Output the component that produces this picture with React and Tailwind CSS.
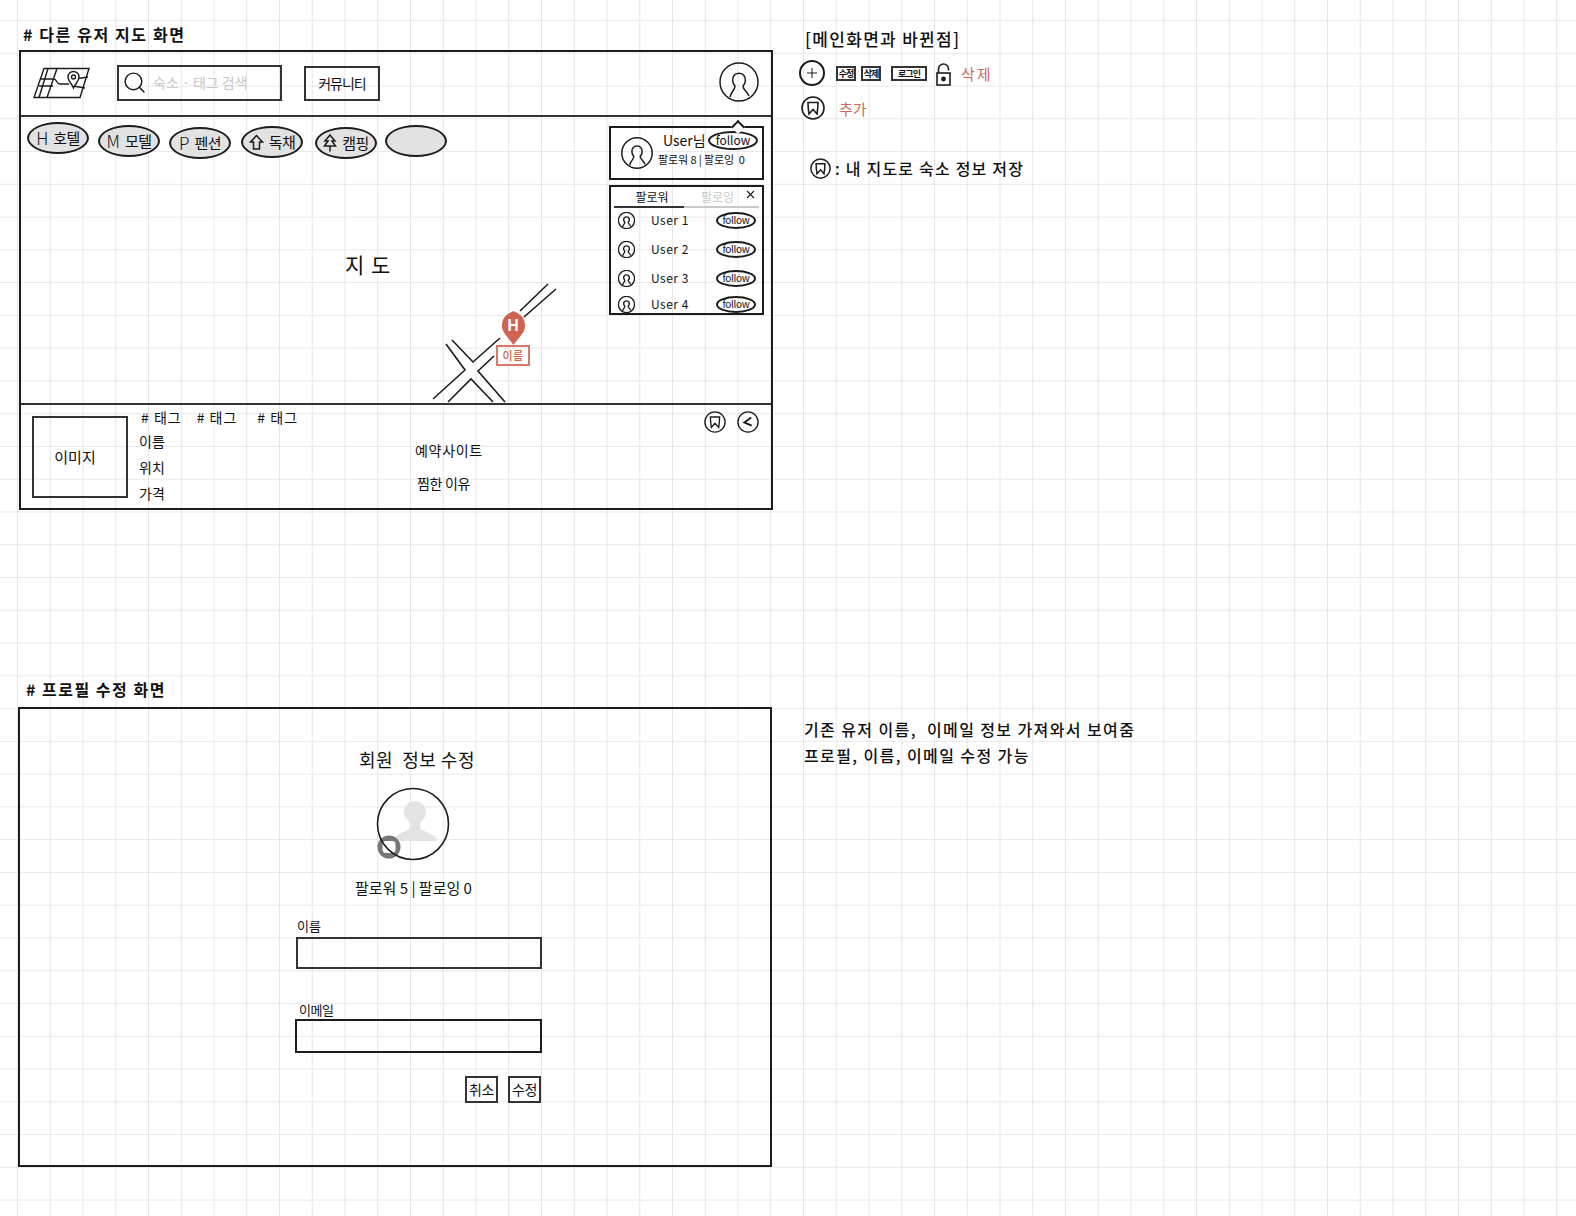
import React from 'react';
import { Search, Plus, X } from 'lucide-react';

const ink = '#1c1c1c';

const chips = [
  { label: '호텔', mark: 'H', box: 'ml-[6px] mt-[5px]' },
  { label: '모텔', mark: 'M', box: 'ml-[9px] mt-[8px]' },
  { label: '펜션', mark: 'P', box: 'ml-[9px] mt-[10px]' },
  { label: '독채', mark: 'home', box: 'ml-[10px] mt-[9px]' },
  { label: '캠핑', mark: 'tree', box: 'ml-[12px] mt-[10px]' },
  { label: '', mark: '', box: 'ml-[8px] mt-[8px]' },
];

const followers = [
  { name: 'User 1', row: '-mt-[1px]' },
  { name: 'User 2', row: 'mt-[3px]' },
  { name: 'User 3', row: 'mt-[3px]' },
  { name: 'User 4', row: 'mt-0' },
];

// 지도 로고
const MapLogo = () => (
  <svg className="mb-[2px]" width="58" height="32" viewBox="0 0 58 32" fill="none" stroke={ink} strokeWidth="1.4">
    <path d="M11 1.5H56L47 30.5H1Z" />
    <path d="M15 1.5L6 30.5M24 1.5L14 30.5M8 12H21C24 12 23 17 27 17H36M6 19H20M40 19L52 21M42 12L55 10" />
    <path d="M35 10A5.5 5.5 0 0 1 46 10C46 14 42 17 40.5 21C39 17 35 14 35 10Z" fill="#fff" />
    <circle cx="40.5" cy="10" r="2" />
  </svg>
);

const UserCircle = ({ size = 40, stroke = 1.5 }) => (
  <svg width={size} height={size} viewBox="0 0 40 40" fill="none" stroke={ink} strokeWidth={(stroke * 40) / size}>
    <circle cx="20" cy="20" r="19" />
    <path d="M11 35C12 30 16 28 16 24C13 21 13 16 15 13.5C17 10.5 23 10.5 25 13.5C27 16 27 21 24 24C24 28 28 29 30 34" />
  </svg>
);

const BookmarkCircle = ({ size = 22, stroke = 1.4 }) => (
  <svg width={size} height={size} viewBox="0 0 24 24" fill="none" stroke={ink} strokeWidth={(stroke * 24) / size}>
    <circle cx="12" cy="12" r="11" />
    <path d="M7 6.5H17C17 11 16.5 15 16 18L12 13.5L8 18C7.5 15 7 11 7 6.5Z" />
  </svg>
);

const ShareCircle = () => (
  <svg width="22" height="22" viewBox="0 0 24 24" fill="none" stroke={ink} strokeWidth="1.5">
    <circle cx="12" cy="12" r="11" />
    <path d="M15.5 7L8 12.5L16 16" strokeWidth="2" />
  </svg>
);

const HomeMark = () => (
  <svg width="15" height="17" viewBox="0 0 15 17" fill="none" stroke={ink} strokeWidth="1.5">
    <path d="M7.5 1.5L1.5 8H4.5V15H10.5V8H13.5Z" />
  </svg>
);

const TreeMark = () => (
  <svg width="14" height="18" viewBox="0 0 14 18" fill="none" stroke={ink} strokeWidth="1.5">
    <path d="M7 1L2 7H5L1.5 12H12.5L9 7H12ZM7 12V17.5" />
  </svg>
);

const LockMark = () => (
  <svg width="15" height="23" viewBox="0 0 15 23" fill="none" stroke={ink} strokeWidth="1.6">
    <path d="M2.5 10V6A5 5 0 0 1 12.5 6V7.5" />
    <rect x="1" y="10" width="13" height="12" />
    <circle cx="7.5" cy="16" r="1.6" fill={ink} />
  </svg>
);

const FollowPill = ({ big }) => (
  <span
    className={
      big
        ? 'flex h-[19px] w-[50px] items-center justify-center rounded-[50%] border-2 border-[#1c1c1c] text-[12px] leading-none'
        : 'flex h-[17px] w-[40px] items-center justify-center rounded-[50%] border-2 border-[#1c1c1c] text-[10px] leading-none tracking-[-0.3px]'
    }
  >
    follow
  </span>
);

const SmallBox = ({ children, width }) => (
  <span className={`flex h-[15px] ${width} items-center justify-center border-2 border-[#333] text-[9px] font-bold leading-none tracking-[-1px]`}>
    {children}
  </span>
);

const MapScreen = () => (
  <div className="h-[460px] border-2 border-[#1c1c1c] flex flex-col">
    {/* Header */}
    <div className="h-[65px] shrink-0 border-b-2 border-[#333] flex items-center pl-[12px] pr-[12px]">
      <MapLogo />
      <div className="mb-[2px] ml-[26px] h-[36px] w-[165px] border-2 border-[#333] flex items-center pl-[3px]">
        <Search size={25} strokeWidth={1.4} color={ink} />
        <span className="ml-[6px] whitespace-nowrap text-[14px] text-[#c8c8c8]">숙소 · 태그 검색</span>
      </div>
      <div className="ml-[22px] h-[35px] w-[76px] border-2 border-[#333] flex items-center justify-center text-[14px] tracking-[-1px]">
        커뮤니티
      </div>
      <div className="mb-[3px] ml-auto">
        <UserCircle size={40} />
      </div>
    </div>

    {/* Map */}
    <div className="relative h-[286px] shrink-0">
      <div className="flex items-start">
        {chips.map((chip, i) => (
          <div
            key={i}
            className={`${chip.box} h-[32px] w-[62px] shrink-0 rounded-[50%] border-2 border-[#1c1c1c] bg-[#e2e2e2] flex items-center justify-center gap-[5px] text-[15px]`}
          >
            {chip.mark === 'home' && <HomeMark />}
            {chip.mark === 'tree' && <TreeMark />}
            {chip.mark.length === 1 && <span className="text-[17px] font-light">{chip.mark}</span>}
            {chip.label && <span className="tracking-[-0.5px]">{chip.label}</span>}
          </div>
        ))}
      </div>

      <span className="absolute left-[324px] top-[132px] text-[21px] tracking-[1px]">지 도</span>

      {/* Roads */}
      <svg className="absolute inset-0 h-full w-full" viewBox="21 117 750 286" fill="none" stroke={ink} strokeWidth="1.6">
        <path d="M548 284L520 311M556 289L524 317" />
        <path d="M500 338L473 362L452 340M446 344L465 370L433 399M494 356L478 371L505 402M448 402L471 379L493 402" />
      </svg>

      {/* Marker */}
      <div className="absolute left-[475px] top-[194px] flex w-[34px] flex-col items-center">
        <div className="relative h-[34px] w-[23px]">
          <svg width="23" height="34" viewBox="0 0 23 34" fill="#cf6250">
            <path d="M11.5 0C5 3 0 6 0 15C0 22 7 27 11.5 34C16 27 23 22 23 15C23 6 18 3 11.5 0Z" />
          </svg>
          <span className="absolute inset-x-0 top-[2px] text-center text-[16px] font-bold leading-[22px] text-white">H</span>
        </div>
        <div className="h-[21px] w-[34px] border-2 border-[#d8786a] flex items-center justify-center text-[11px] font-medium leading-none tracking-[0.5px] text-[#cf6250]">
          이름
        </div>
      </div>

      {/* Profile popup */}
      <div className="absolute right-[7px] top-[9px] w-[155px] flex flex-col gap-[5px]">
        <div className="relative h-[54px] border-2 border-[#1c1c1c] flex items-center pl-[10px]">
          <span className="absolute right-[19px] -top-[6px] h-[10px] w-[10px] rotate-45 border-l-2 border-t-2 border-[#1c1c1c] bg-white" />
          <UserCircle size={32} />
          <div className="mb-[9px] ml-[5px] flex w-[100px] flex-col">
            <div className="flex h-[22px] items-center">
              <span className="ml-[5px] whitespace-nowrap text-[14px] leading-none">User님</span>
              <span className="ml-auto">
                <FollowPill big />
              </span>
            </div>
            <span className="whitespace-nowrap text-[11px] leading-[17px] tracking-[-0.1px]">팔로워 8 | 팔로잉 &nbsp;0</span>
          </div>
        </div>

        <div className="relative h-[130px] border-2 border-[#1c1c1c] px-[3px]">
          <X size={13} strokeWidth={2} color={ink} className="absolute right-[5px] top-[1px]" />
          <div className="flex h-[21px] items-center border-b-2 border-[#c9c9c9]">
            <div className="relative -mb-[2px] h-[21px] w-[70px] border-b-2 border-[#333] flex items-center justify-center pl-[6px] text-[12px]">
              팔로워
            </div>
            <span className="ml-[17px] text-[12px] text-[#c6c6c6]">팔로잉</span>
          </div>
          {followers.map((f) => (
            <div key={f.name} className={`${f.row} flex h-[26px] items-center pl-[4px] pr-[3px]`}>
              <UserCircle size={17} stroke={1.3} />
              <span className="ml-[16px] text-[12px] tracking-[0.5px]">{f.name}</span>
              <span className="ml-auto">
                <FollowPill />
              </span>
            </div>
          ))}
        </div>
      </div>
    </div>

    {/* Stay detail */}
    <div className="flex-1 border-t-2 border-[#333] flex">
      <div className="ml-[11px] mt-[11px] h-[82px] w-[96px] border-2 border-[#333] flex items-center justify-center pr-[10px] text-[15px]">
        이미지
      </div>
      <div className="ml-[11px] w-[276px] pt-[2px] text-[14px]">
        <div className="flex h-[21px] items-center gap-[15px] pl-[2px] text-[14px] tracking-[1px]">
          <span># 태그</span>
          <span># 태그</span>
          <span className="ml-[5px]"># 태그</span>
        </div>
        <p className="h-[26px] leading-[26px]">이름</p>
        <p className="h-[26px] leading-[26px]">위치</p>
        <p className="h-[26px] leading-[26px]">가격</p>
      </div>
      <div className="pt-[32px] text-[14px]">
        <p className="h-[26px] leading-[26px] tracking-[0.7px]">예약사이트</p>
        <p className="mt-[7px] h-[26px] pl-[2px] leading-[26px] tracking-[-0.3px]">찜한 이유</p>
      </div>
      <div className="ml-auto mr-[12px] mt-[6px] flex items-start gap-[11px]">
        <BookmarkCircle />
        <ShareCircle />
      </div>
    </div>
  </div>
);

const ProfileScreen = () => (
  <div className="-ml-px h-[460px] w-[754px] border-2 border-[#1c1c1c] pl-[276px] pt-[38px]">
    <div className="w-[246px]">
      <p className="pr-[4px] text-center text-[18px] leading-[24px] tracking-[0.5px]">회원&nbsp; 정보 수정</p>
      <div className="ml-[80px] mt-[16px] h-[74px] w-[74px]">
        <svg className="overflow-visible" width="74" height="74" viewBox="0 0 74 74" fill="none">
          <circle cx="39" cy="25" r="11" fill="#e3e3e3" />
          <path d="M18 54C18 48 26 46 32 43C34 42 34 38 33 33H45C44 38 44 42 46 43C52 46 60 48 61 54Z" fill="#e3e3e3" />
          {/* 프로필 사진 변경 버튼 */}
          <path
            fillRule="evenodd"
            fill="#777"
            d="M13 48.5A11.5 11.5 0 1 1 13 71.5A11.5 11.5 0 1 1 13 48.5ZM9 54A3 3 0 0 0 6.5 57V63A3 3 0 0 0 9 66H17A3 3 0 0 0 19.5 63V57A3 3 0 0 0 17 54Z"
          />
          <circle cx="37" cy="37" r="35.5" stroke={ink} strokeWidth="1.6" />
        </svg>
      </div>
      <p className="mt-[15px] pl-[59px] text-[15px] leading-[24px]">팔로워 5 | 팔로잉 0</p>

      <label className="mt-[17px] block h-[17px] pl-px text-[13px] leading-[17px]">이름</label>
      <div className="mt-[3px] h-[32px] border-2 border-[#333]" />
      <label className="mt-[32px] block h-[18px] pl-[3px] text-[13px] leading-[18px] tracking-[-0.5px]">이메일</label>
      <div className="-ml-px h-[34px] border-2 border-[#1c1c1c]" />

      <div className="mt-[23px] flex justify-end gap-[10px] pr-px">
        <div className="h-[27px] w-[33px] border-2 border-[#333] flex items-center justify-center text-[14px] tracking-[-0.5px]">취소</div>
        <div className="h-[27px] w-[33px] border-2 border-[#333] flex items-center justify-center text-[14px] tracking-[-0.5px]">수정</div>
      </div>
    </div>
  </div>
);

export default function App() {
  return (
    <div className="w-[1576px] h-[1216px] overflow-hidden flex pl-[19px] text-[#111] font-['Noto_Sans_CJK_KR','Noto_Sans',sans-serif] bg-white bg-[linear-gradient(to_right,#e6e6e6_1px,transparent_1px),linear-gradient(to_bottom,#e8e8e8_1px,transparent_1px)] bg-[size:32.75px_32.77px] bg-[position:17px_20px]">
      {/* Left: wireframes */}
      <div className="w-[754px] shrink-0 pt-[20px]">
        <h2 className="h-[30px] pl-[4px] text-[16px] font-semibold leading-[28px] tracking-[1.6px]"># 다른 유저 지도 화면</h2>
        <MapScreen />
        <h2 className="mt-[167px] h-[30px] pl-[7px] text-[16px] font-semibold leading-[24px] tracking-[1.5px]"># 프로필 수정 화면</h2>
        <ProfileScreen />
      </div>

      {/* Right: notes */}
      <div className="ml-[26px] w-[400px] pt-[26px]">
        <p className="h-[26px] pl-[6px] text-[17px] font-medium leading-[26px] tracking-[1.3px]">[메인화면과 바뀐점]</p>
        <div className="mt-[8px] flex h-[26px] items-center">
          <span className="flex h-[26px] w-[26px] items-center justify-center rounded-full border-2 border-[#1c1c1c]">
            <Plus size={16} strokeWidth={1.5} color={ink} />
          </span>
          <span className="ml-[11px]"><SmallBox width="w-[20px]">수정</SmallBox></span>
          <span className="ml-[5px]"><SmallBox width="w-[20px]">삭제</SmallBox></span>
          <span className="ml-[10px]"><SmallBox width="w-[36px]">로그인</SmallBox></span>
          <span className="ml-[9px] mt-[2px]"><LockMark /></span>
          <span className="ml-[10px] mt-[3px] text-[15px] tracking-[2px] text-[#cb6a5f]">삭제</span>
        </div>
        <div className="mt-[10px] flex h-[24px] items-center pl-[2px]">
          <BookmarkCircle size={24} stroke={1.6} />
          <span className="ml-[14px] mt-[2px] text-[15px] text-[#cb6a5f]">추가</span>
        </div>
        <div className="mt-[35px] flex h-[26px] items-center pl-[11px]">
          <BookmarkCircle size={21} stroke={1.5} />
          <span className="ml-[4px] text-[16px] font-medium tracking-[1.2px]">: 내 지도로 숙소 정보 저장</span>
        </div>
        <div className="mt-[535px] text-[16px] font-medium leading-[26px] tracking-[1.4px]">
          <p className="pl-[5px]">기존 유저 이름, &nbsp;이메일 정보 가져와서 보여줌</p>
          <p className="pl-[5px]">프로필, 이름, 이메일 수정 가능</p>
        </div>
      </div>
    </div>
  );
}
